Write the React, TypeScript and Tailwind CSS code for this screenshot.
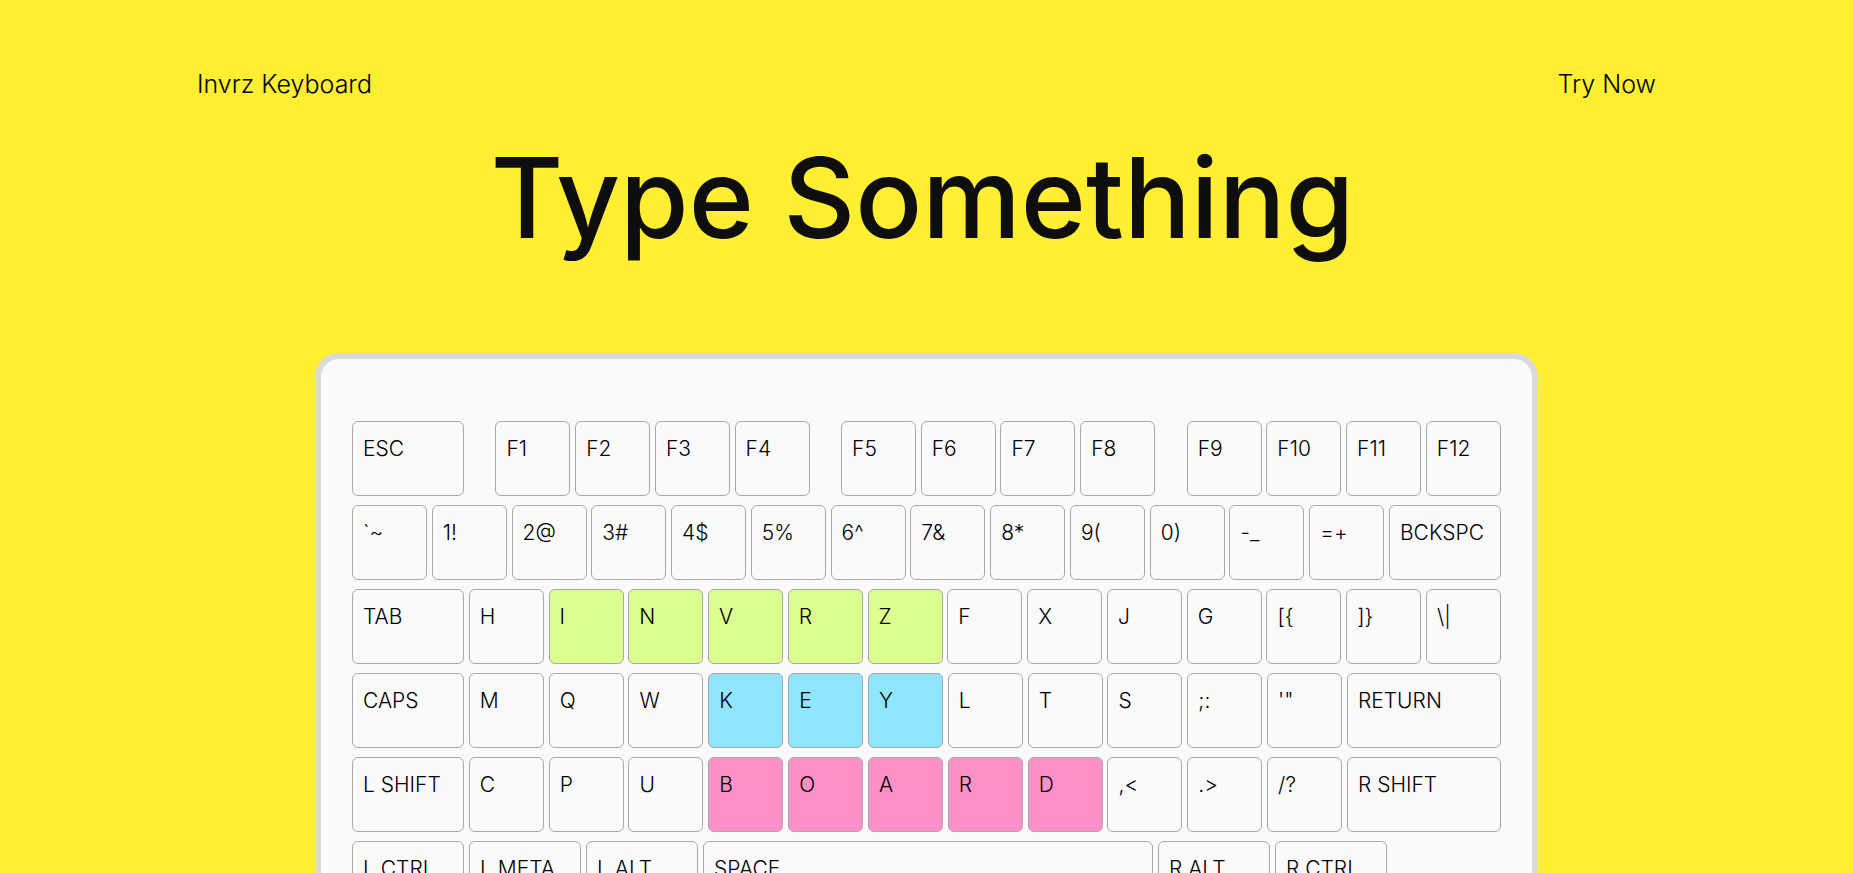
type Tone = "plain" | "green" | "blue" | "pink";
type Size = "unit" | "wide" | "enter" | "space";
type Item = { label: string; size: Size; tone: Tone } | null;

const tones: Record<Tone, string> = {
  plain: "bg-[#fafafa]",
  green: "bg-[#ddff8f]",
  blue: "bg-[#90e5ff]",
  pink: "bg-[#ff90c8]",
};

const sizes: Record<Size, string> = {
  unit: "w-[75px]",
  wide: "w-28",
  enter: "w-[154px]",
  space: "w-[450px]",
};

const key = (label: string, size: Size = "unit", tone: Tone = "plain"): Item => ({ label, size, tone });
const keys = (labels: string, tone: Tone = "plain"): Item[] =>
  labels.split(" ").map((label) => key(label, "unit", tone));

const fullRows: Item[][] = [
  [key("ESC", "wide"), null, ...keys("F1 F2 F3 F4"), null, ...keys("F5 F6 F7 F8"), null, ...keys("F9 F10 F11 F12")],
  [...keys("`~ 1! 2@ 3# 4$ 5% 6^ 7& 8* 9( 0) -_ =+"), key("BCKSPC", "wide")],
  [key("TAB", "wide"), ...keys("H"), ...keys("I N V R Z", "green"), ...keys("F X J G [{ ]} \\|")],
  [key("CAPS", "wide"), ...keys("M Q W"), ...keys("K E Y", "blue"), ...keys("L T S ;: '\""), key("RETURN", "enter")],
  [key("L SHIFT", "wide"), ...keys("C P U"), ...keys("B O A R D", "pink"), ...keys(",< .> /?"), key("R SHIFT", "enter")],
];

const bottomRow: Item[] = [
  key("L CTRL", "wide"),
  key("L META", "wide"),
  key("L ALT", "wide"),
  key("SPACE", "space"),
  key("R ALT", "wide"),
  key("R CTRL", "wide"),
];

function Cap({ item }: { item: Item }) {
  if (!item) return <span className="w-[22px] shrink-0" />;
  return (
    <button
      type="button"
      className={`flex h-[75px] shrink-0 items-start rounded-md border border-[#a8a8a8] px-2.5 pt-3 text-left text-[21px] leading-[30px] whitespace-nowrap text-black ${sizes[item.size]} ${tones[item.tone]}`}
    >
      {item.label}
    </button>
  );
}

export default function App() {
  return (
    <div className="h-screen overflow-hidden bg-[#ffee32] font-['Inter','Noto_Sans',sans-serif] font-light text-[#0e0e0e]">
      <header className="mx-auto flex max-w-[1459px] items-center justify-between pt-16 text-[25px] leading-10 text-black">
        <a href="#home">Invrz Keyboard</a>
        <a href="#try">Try Now</a>
      </header>
      <main>
        <h1 className="mt-7 pr-2 text-center text-[111px] leading-[132px] font-medium">Type Something</h1>
        <section
          aria-label="Keyboard"
          className="mx-auto mt-[89px] flex w-full max-w-[1223px] flex-col gap-[9px] rounded-3xl border-6 border-[#dadada] bg-[#fafafa] px-[31px] pt-[62px] pb-16"
        >
          {fullRows.map((row, r) => (
            <div key={r} className="flex justify-between">
              {row.map((item, i) => (
                <Cap key={i} item={item} />
              ))}
            </div>
          ))}
          <div className="flex gap-[5px]">
            {bottomRow.map((item, i) => (
              <Cap key={i} item={item} />
            ))}
          </div>
        </section>
      </main>
    </div>
  );
}
